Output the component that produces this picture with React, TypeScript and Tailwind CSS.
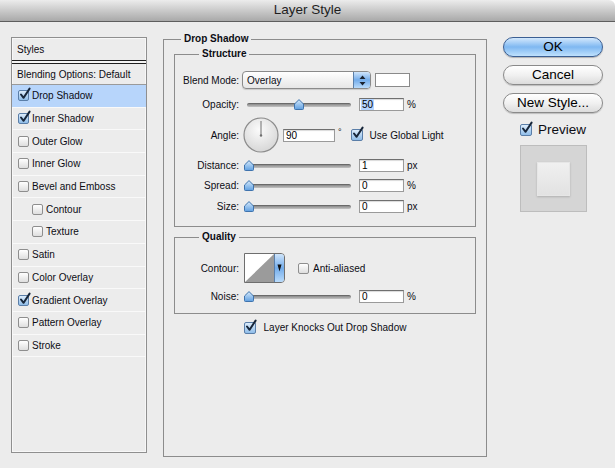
import React from "react";

const listItems = [
  { label: "Drop Shadow", checked: true, active: true },
  { label: "Inner Shadow", checked: true },
  { label: "Outer Glow" },
  { label: "Inner Glow" },
  { label: "Bevel and Emboss" },
  { label: "Contour", indent: true },
  { label: "Texture", indent: true },
  { label: "Satin" },
  { label: "Color Overlay" },
  { label: "Gradient Overlay", checked: true },
  { label: "Pattern Overlay" },
  { label: "Stroke" },
];

function CheckBox({ checked, size = 11 }: { checked?: boolean; size?: number }) {
  return (
    <span className="relative inline-block shrink-0" style={{ width: size, height: size }}>
      <span
        className={
          checked
            ? "block h-full w-full rounded-[2px] border border-[#5a7ea8] bg-gradient-to-b from-[#dcecfb] to-[#8fbde9]"
            : "block h-full w-full rounded-[2px] border border-[#8e8e8e] bg-gradient-to-b from-white to-[#dedede]"
        }
      />
      {checked && (
        <svg className="absolute -top-[3px] left-[1px]" width="12" height="13" viewBox="0 0 12 13">
          <path d="M2 7.5 L4.6 10.8 L10.6 1.6" fill="none" stroke="#17263a" strokeWidth="2" strokeLinecap="round" strokeLinejoin="round" />
        </svg>
      )}
    </span>
  );
}

function Thumb({ left }: { left: number }) {
  return (
    <svg className="absolute top-0" style={{ left }} width="10" height="11" viewBox="0 0 10 11">
      <defs>
        <linearGradient id="thumbGrad" x1="0" y1="0" x2="0" y2="1">
          <stop offset="0" stopColor="#d6eafc" />
          <stop offset="1" stopColor="#5f9fe0" />
        </linearGradient>
      </defs>
      <path d="M0.5 5 L5 0.6 L9.5 5 L9.5 9.6 Q9.5 10.5 8.6 10.5 L1.4 10.5 Q0.5 10.5 0.5 9.6 Z" fill="url(#thumbGrad)" stroke="#3f73ad" strokeWidth="1" />
    </svg>
  );
}

function Slider({ pos }: { pos: number }) {
  return (
    <div className="relative ml-[8px] h-[11px] w-[104px] shrink-0">
      <div className="absolute left-0 right-0 top-[4px] h-[4px] rounded-full border-t border-[#6a6a6a] bg-gradient-to-b from-[#8a8a8a] to-[#c4c4c4]" />
      <Thumb left={pos} />
    </div>
  );
}

function NumInput({ value, selected, width = 45 }: { value: string; selected?: boolean; width?: number }) {
  return (
    <div
      className="flex h-[13px] shrink-0 items-center border border-[#9a9a9a] border-t-[#6f6f6f] bg-white pl-[1px] text-[10px] leading-[11px] text-black shadow-[inset_0_1px_1px_rgba(0,0,0,0.15)]"
      style={{ width }}
    >
      <span className={selected ? "bg-[#b5d5ff] px-[1px]" : "px-[1px]"}>{value}</span>
    </div>
  );
}

function Label({ children }: { children: React.ReactNode }) {
  return <span className="w-[56px] shrink-0 whitespace-nowrap text-right">{children}</span>;
}

function SliderRow({ label, pos, value, unit, selected, mt }: { label: string; pos: number; value: string; unit: string; selected?: boolean; mt: string }) {
  return (
    <div className={`flex h-[13px] items-center ${mt}`}>
      <Label>{label}</Label>
      <Slider pos={pos} />
      <div className="ml-[8px]">
        <NumInput value={value} selected={selected} />
      </div>
      <span className="ml-[3px]">{unit}</span>
    </div>
  );
}

function AquaButton({ children, primary }: { children: React.ReactNode; primary?: boolean }) {
  return (
    <button
      className={
        primary
          ? "flex h-[20px] w-[100px] items-center justify-center rounded-full border border-[#3b5f93] bg-gradient-to-b from-[#d3e8fc] via-[#7fb8f1] to-[#bfe1fd] text-[13.5px] leading-none text-black shadow-[0_1px_1px_rgba(0,0,0,0.25)]"
          : "flex h-[20px] w-[100px] items-center justify-center rounded-full border border-[#8a8a8a] bg-gradient-to-b from-white via-[#f1f1f1] to-[#dcdcdc] text-[13.5px] leading-none text-black shadow-[0_1px_1px_rgba(0,0,0,0.2)]"
      }
    >
      {children}
    </button>
  );
}

export default function App() {
  return (
    <div className="h-[468px] w-[615px] overflow-hidden bg-white font-['Liberation_Sans',Arial,sans-serif] text-[10px] text-[#0c0c14]">
      {/* title bar */}
      <div className="flex h-[22px] items-center justify-center rounded-tr-[6px] border-b border-[#5e5e5e] bg-gradient-to-b from-[#ececec] to-[#a9a9a9] text-[13.5px] text-[#1e1e1e]">
        Layer Style
      </div>

      <div className="flex h-[446px] items-start bg-[#ececec]">
        {/* styles list */}
        <div className="ml-[11px] mt-[15px] h-[416px] w-[136px] shrink-0 border border-[#8f8f8f] shadow-[inset_0_0_0_1px_#f7f7f7]">
          <div className="flex h-[22px] items-center pl-[5px]">Styles</div>
          <div className="h-px bg-[#1f1f1f]" />
          <div className="h-[2px] bg-[#f4f4f4]" />
          <div className="h-px bg-[#1f1f1f]" />
          <div className="flex h-[21px] items-center border-b border-[#9a9a9a] pl-[5px]">Blending Options: Default</div>
          {listItems.map((item) => (
            <div
              key={item.label}
              className={`flex h-[22.7px] items-center gap-[3px] border-b border-[#f9f9f9] ${item.indent ? "pl-[20px]" : "pl-[6px]"} ${item.active ? "bg-[#b7d5fb]" : ""}`}
            >
              <CheckBox checked={item.checked} />
              <span>{item.label}</span>
            </div>
          ))}
        </div>

        {/* settings */}
        <fieldset className="ml-[16px] mt-[10px] h-[425px] w-[324px] shrink-0 border border-[#8c8c8c] px-[10px] pb-0 pt-0">
          <legend className="ml-[7px] px-[3px] text-[10px] font-bold leading-[14px]">Drop Shadow</legend>

          <fieldset className="mt-[1px] border border-[#8c8c8c] p-0 pb-[13px] pl-[8px]">
            <legend className="ml-[16px] px-[3px] text-[10px] font-bold leading-[14px]">Structure</legend>

            <div className="mt-[10px] flex h-[18px] items-center">
              <Label>Blend Mode:</Label>
              <div className="ml-[3px] flex h-[18px] w-[129px] shrink-0 overflow-hidden rounded-[4px] border border-[#8a8a8a] bg-gradient-to-b from-white to-[#e6e6e6] shadow-[0_1px_1px_rgba(0,0,0,0.15)]">
                <span className="flex flex-1 items-center pl-[4px]">Overlay</span>
                <span className="flex w-[17px] items-center justify-center border-l border-[#5b7fa9] bg-gradient-to-b from-[#cfe5fb] via-[#73acea] to-[#b9dbfb]">
                  <svg width="7" height="11" viewBox="0 0 7 11">
                    <path d="M3.5 0.5 L6.5 4 L0.5 4 Z M3.5 10.5 L6.5 7 L0.5 7 Z" fill="#1b2330" />
                  </svg>
                </span>
              </div>
              <div className="ml-[4px] h-[14px] w-[35px] shrink-0 border border-[#8a8a8a] bg-white" />
            </div>

            <SliderRow label="Opacity:" pos={47} value="50" unit="%" selected mt="mt-[9px]" />

            <div className="mt-[6px] flex h-[36px] items-center">
              <Label>Angle:</Label>
              <svg className="ml-[4px] shrink-0" width="36" height="36" viewBox="0 0 36 36">
                <defs>
                  <radialGradient id="dialGrad" cx="0.45" cy="0.35" r="0.7">
                    <stop offset="0" stopColor="#fbfbfb" />
                    <stop offset="1" stopColor="#d4d4d4" />
                  </radialGradient>
                </defs>
                <circle cx="18" cy="18" r="17" fill="url(#dialGrad)" stroke="#8c8c8c" strokeWidth="1.2" />
                <line x1="18" y1="18" x2="18" y2="4" stroke="#6f6f6f" strokeWidth="1" />
                <circle cx="18" cy="18.5" r="1.2" fill="#6f6f6f" />
              </svg>
              <div className="ml-[4px]">
                <NumInput value="90" width={52} />
              </div>
              <span className="ml-[3px] self-start pt-[9px] text-[9px]">°</span>
              <div className="ml-[9px] flex items-center gap-[7px]">
                <CheckBox checked size={12} />
                <span>Use Global Light</span>
              </div>
            </div>

            <SliderRow label="Distance:" pos={-3} value="1" unit="px" mt="mt-[6px]" />
            <SliderRow label="Spread:" pos={-3} value="0" unit="%" mt="mt-[7px]" />
            <SliderRow label="Size:" pos={-3} value="0" unit="px" mt="mt-[8px]" />
          </fieldset>

          <fieldset className="mt-[3px] border border-[#8c8c8c] p-0 pb-[10px] pl-[8px]">
            <legend className="ml-[16px] px-[3px] text-[10px] font-bold leading-[14px]">Quality</legend>

            <div className="mt-[9px] flex h-[30px] items-center">
              <Label>Contour:</Label>
              <div className="ml-[5px] flex h-[30px] w-[41px] shrink-0 overflow-hidden rounded-r-[4px] border border-[#6e6e6e]">
                <svg width="29" height="28" viewBox="0 0 29 28" className="shrink-0">
                  <rect width="29" height="28" fill="#ffffff" />
                  <path d="M0 28 L29 0 L29 28 Z" fill="#9b9b9b" />
                </svg>
                <span className="flex flex-1 items-center justify-center border-l border-[#5b7fa9] bg-gradient-to-b from-[#cfe5fb] via-[#73acea] to-[#b9dbfb]">
                  <svg width="5" height="8" viewBox="0 0 5 8">
                    <path d="M0.5 0.5 L4.5 0.5 L2.5 7.5 Z" fill="#111" />
                  </svg>
                </span>
              </div>
              <div className="ml-[13px] flex items-center gap-[4px]">
                <CheckBox />
                <span>Anti-aliased</span>
              </div>
            </div>

            <SliderRow label="Noise:" pos={-3} value="0" unit="%" mt="mt-[7px]" />
          </fieldset>

          <div className="mt-[7px] flex h-[13px] items-center justify-center gap-[8px]">
            <CheckBox checked size={12} />
            <span>Layer Knocks Out Drop Shadow</span>
          </div>
        </fieldset>

        {/* buttons */}
        <div className="ml-[16px] mt-[15px] flex w-[100px] shrink-0 flex-col items-center">
          <AquaButton primary>OK</AquaButton>
          <div className="mt-[8px]">
            <AquaButton>Cancel</AquaButton>
          </div>
          <div className="mt-[8px]">
            <AquaButton>New Style...</AquaButton>
          </div>
          <div className="mt-[9px] flex h-[16px] items-center gap-[6px] text-[13.5px]">
            <CheckBox checked size={12} />
            <span>Preview</span>
          </div>
          <div className="mt-[7px] flex h-[67px] w-[67px] items-center justify-center border border-[#bdbdbd] bg-[#d5d5d5]">
            <div className="h-[34px] w-[33px] border border-[#e6e6e6] bg-gradient-to-b from-[#f0f0f0] to-[#e2e2e2] shadow-[0_1px_2px_rgba(0,0,0,0.18)]" />
          </div>
        </div>
      </div>
    </div>
  );
}
